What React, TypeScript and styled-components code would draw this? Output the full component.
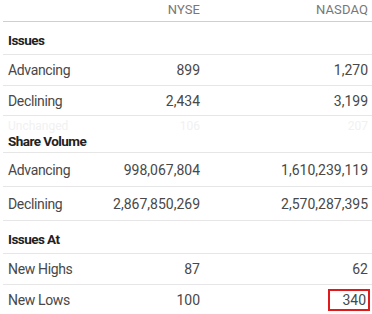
import React from 'react';
import styled, { createGlobalStyle } from 'styled-components';

const GlobalStyle = createGlobalStyle`
    body {
        margin: 0;
        background: #fff;
        font-family: Roboto, "Liberation Sans", Arial, sans-serif;
        color: #333;
    }
`;

const Table = styled.div`
    width: 369px;
    margin-left: 3px;
`;

const Row = styled.div<{h?: number, head?: boolean, last?: boolean}>`
    display: grid;
    grid-template-columns: 92px 100px 168px;
    align-items: ${p => p.head ? 'end' : 'center'};
    height: ${p => p.h || 30}px;
    padding: ${p => p.head ? '0 4px 6px 5px' : '0 4px 0 5px'};
    box-sizing: border-box;
    border-bottom: ${p => p.last ? '0 none' : 'solid 1px #e6e6e6'};
`;

const HeaderRow = styled(Row)`
    height: 22px;
    align-items: center;
    padding: 0 4px 2px 5px;
    border-bottom: solid 1px #cfcfcf;
`;

const ColTitle = styled.div`
    text-align: right;
    font-size: 13px;
    color: #777;
    letter-spacing: 0.1px;
`;

const Label = styled.div`
    font-size: 14px;
    letter-spacing: -0.35px;
    color: #484848;
    white-space: nowrap;
`;

const Heading = styled.div`
    font-size: 13.5px;
    font-weight: 700;
    letter-spacing: -0.55px;
    color: #222;
    white-space: nowrap;
`;

const Value = styled.div`
    text-align: right;
    font-size: 14px;
    color: #484848;
    white-space: nowrap;
`;

const Mark = styled.span`
    display: inline-block;
    border: solid 2px #e0191b;
    padding: 1px 2px 1px 12px;
    margin-right: -2px;
    line-height: 16px;
`;

const HeadBlock = styled.div`
    display: grid;
    grid-template-rows: 13px auto;
    height: 37px;
    padding: 4px 4px 0 5px;
    box-sizing: border-box;
    border-bottom: solid 1px #e6e6e6;
`;

const Ghost = styled.div`
    display: grid;
    grid-template-columns: 92px 100px 168px;
    font-size: 12px;
    line-height: 12px;
    color: #f1f1f1;
    div:not(:first-child) {
        text-align: right;
    }
`;

const HeadLine = styled.div`
    display: flex;
    align-items: flex-end;
    padding-bottom: 6px;
`;

export default function App() {
    return (
        <>
            <GlobalStyle />
            <Table>
                <HeaderRow>
                    <div />
                    <ColTitle>NYSE</ColTitle>
                    <ColTitle>NASDAQ</ColTitle>
                </HeaderRow>

                <Row head h={33}>
                    <Heading>Issues</Heading>
                </Row>
                <Row h={31}>
                    <Label>Advancing</Label>
                    <Value>899</Value>
                    <Value>1,270</Value>
                </Row>
                <Row h={30}>
                    <Label>Declining</Label>
                    <Value>2,434</Value>
                    <Value>3,199</Value>
                </Row>

                <HeadBlock>
                    <Ghost>
                        <div>Unchanged</div>
                        <div>106</div>
                        <div>207</div>
                    </Ghost>
                    <HeadLine>
                        <Heading>Share Volume</Heading>
                    </HeadLine>
                </HeadBlock>
                <Row h={34}>
                    <Label>Advancing</Label>
                    <Value>998,067,804</Value>
                    <Value>1,610,239,119</Value>
                </Row>
                <Row h={34}>
                    <Label>Declining</Label>
                    <Value>2,867,850,269</Value>
                    <Value>2,570,287,395</Value>
                </Row>

                <Row head h={33}>
                    <Heading>Issues At</Heading>
                </Row>
                <Row h={31}>
                    <Label>New Highs</Label>
                    <Value>87</Value>
                    <Value>62</Value>
                </Row>
                <Row h={29} last>
                    <Label>New Lows</Label>
                    <Value>100</Value>
                    <Value><Mark>340</Mark></Value>
                </Row>
            </Table>
        </>
    );
}
